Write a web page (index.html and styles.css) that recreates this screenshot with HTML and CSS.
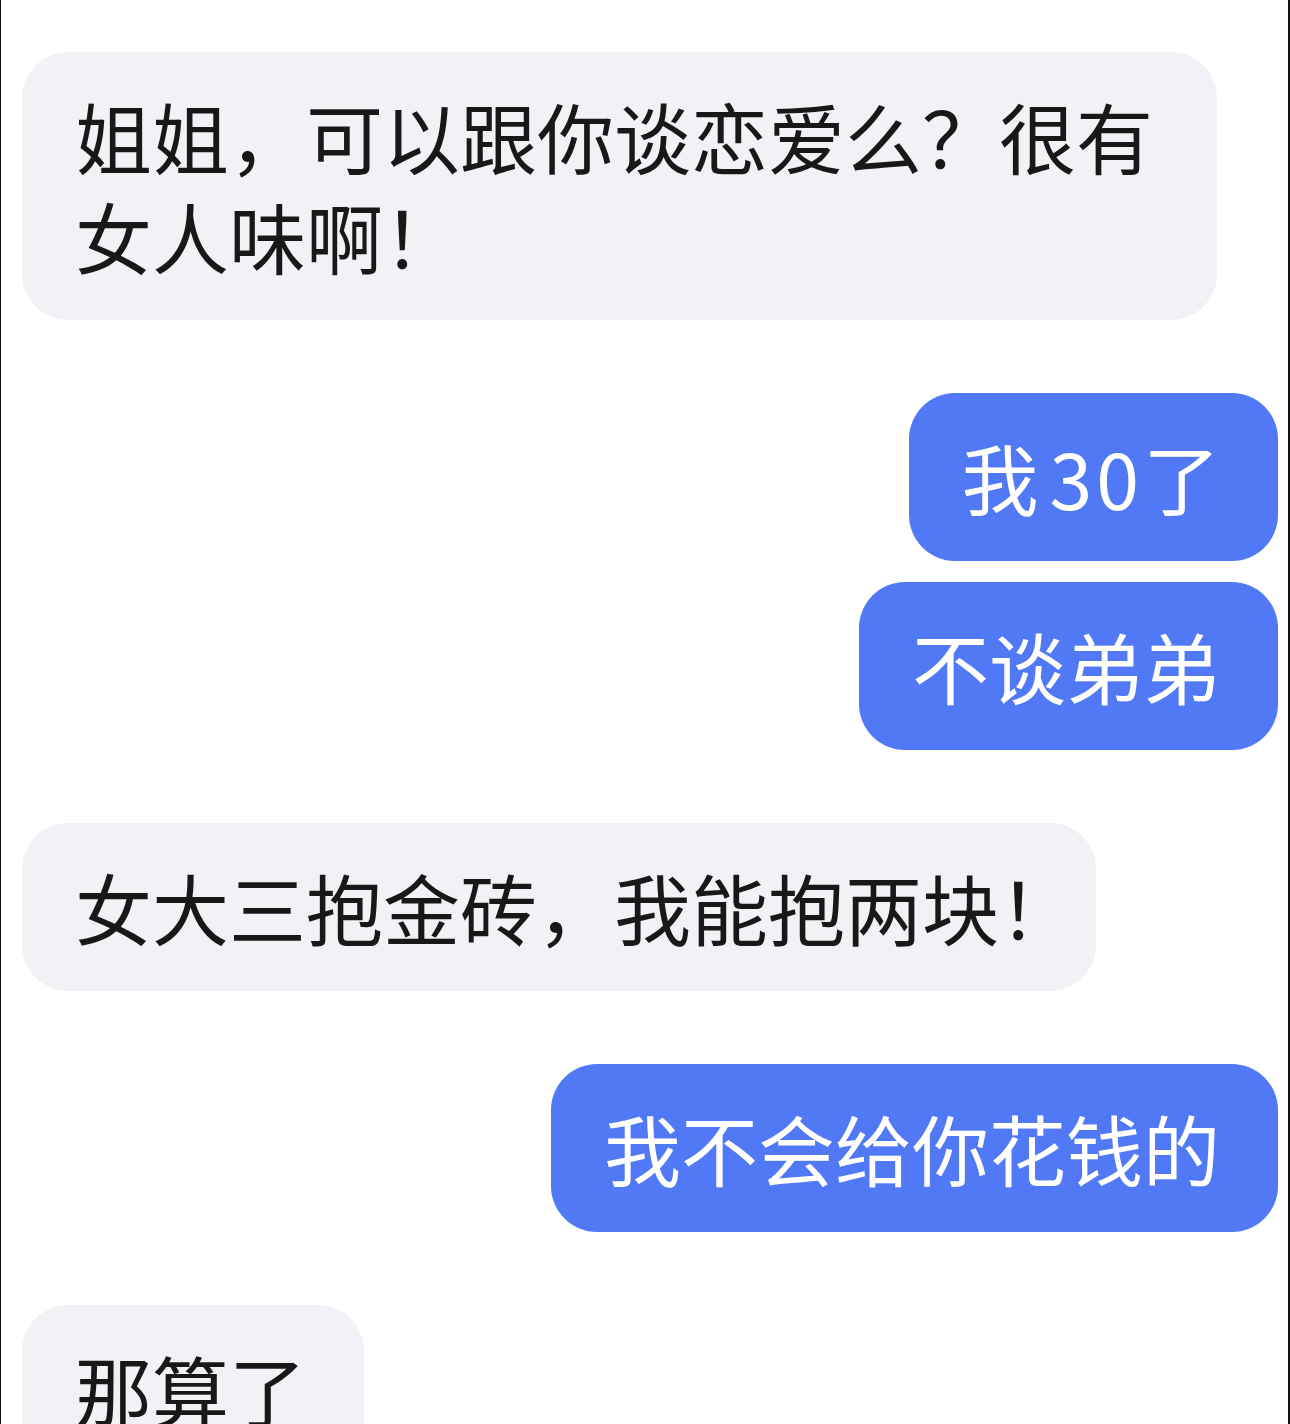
FILE: index.html
```html
<!DOCTYPE html>
<html lang="zh-CN">
<head>
  <meta charset="UTF-8">
  <meta name="viewport" content="width=device-width, initial-scale=1.0">
  <title>聊天记录</title>
  <link rel="stylesheet" href="styles.css">
</head>
<body>
  <div class="screen">
    <div class="chat">
      <div class="group">
        <div class="msg in">姐姐，可以跟你谈恋爱么？很有女人味啊<span class="half">！</span></div>
      </div>

      <div class="group">
        <div class="msg out">我<span class="num">30</span>了</div>
        <div class="msg out">不谈弟弟</div>
      </div>

      <div class="group">
        <div class="msg in">女大三抱金砖，我能抱两块<span class="half">！</span></div>
      </div>

      <div class="group">
        <div class="msg out">我不会给你花钱的</div>
      </div>

      <div class="group">
        <div class="msg in">那算了</div>
      </div>
    </div>
  </div>
</body>
</html>
```

FILE: styles.css
```css
:root {
  --bubble-in: #f2f2f6;
  --bubble-out: #5179f5;
  --text: #181818;
}
* {
  margin: 0;
  padding: 0;
  box-sizing: border-box;
}
body {
  background: #fff;
  font-family: "Noto Sans CJK SC", "Noto Sans", sans-serif;
  color: var(--text);
}
.screen {
  height: 1424px;
  overflow: hidden;
  border-left: 1px solid #111;
  border-right: 2px solid #111;
}
.chat {
  display: flex;
  flex-direction: column;
  gap: 73px;
  padding: 52px 10px 0 21px;
}
.group {
  display: flex;
  flex-direction: column;
  gap: 21px;
}
.msg {
  max-width: 1195px;
  padding: 34px 58px 34px 53px;
  border-radius: 46px;
  font-size: 77px;
  line-height: 100px;
}
.msg.in {
  align-self: flex-start;
  background: var(--bubble-in);
}
.msg.out {
  align-self: flex-end;
  background: var(--bubble-out);
  color: #fff;
}
.num {
  margin-left: 11px;
  letter-spacing: 4px;
}
/* trailing full-width mark drawn at half width */
.half {
  font-feature-settings: "halt";
}
```
